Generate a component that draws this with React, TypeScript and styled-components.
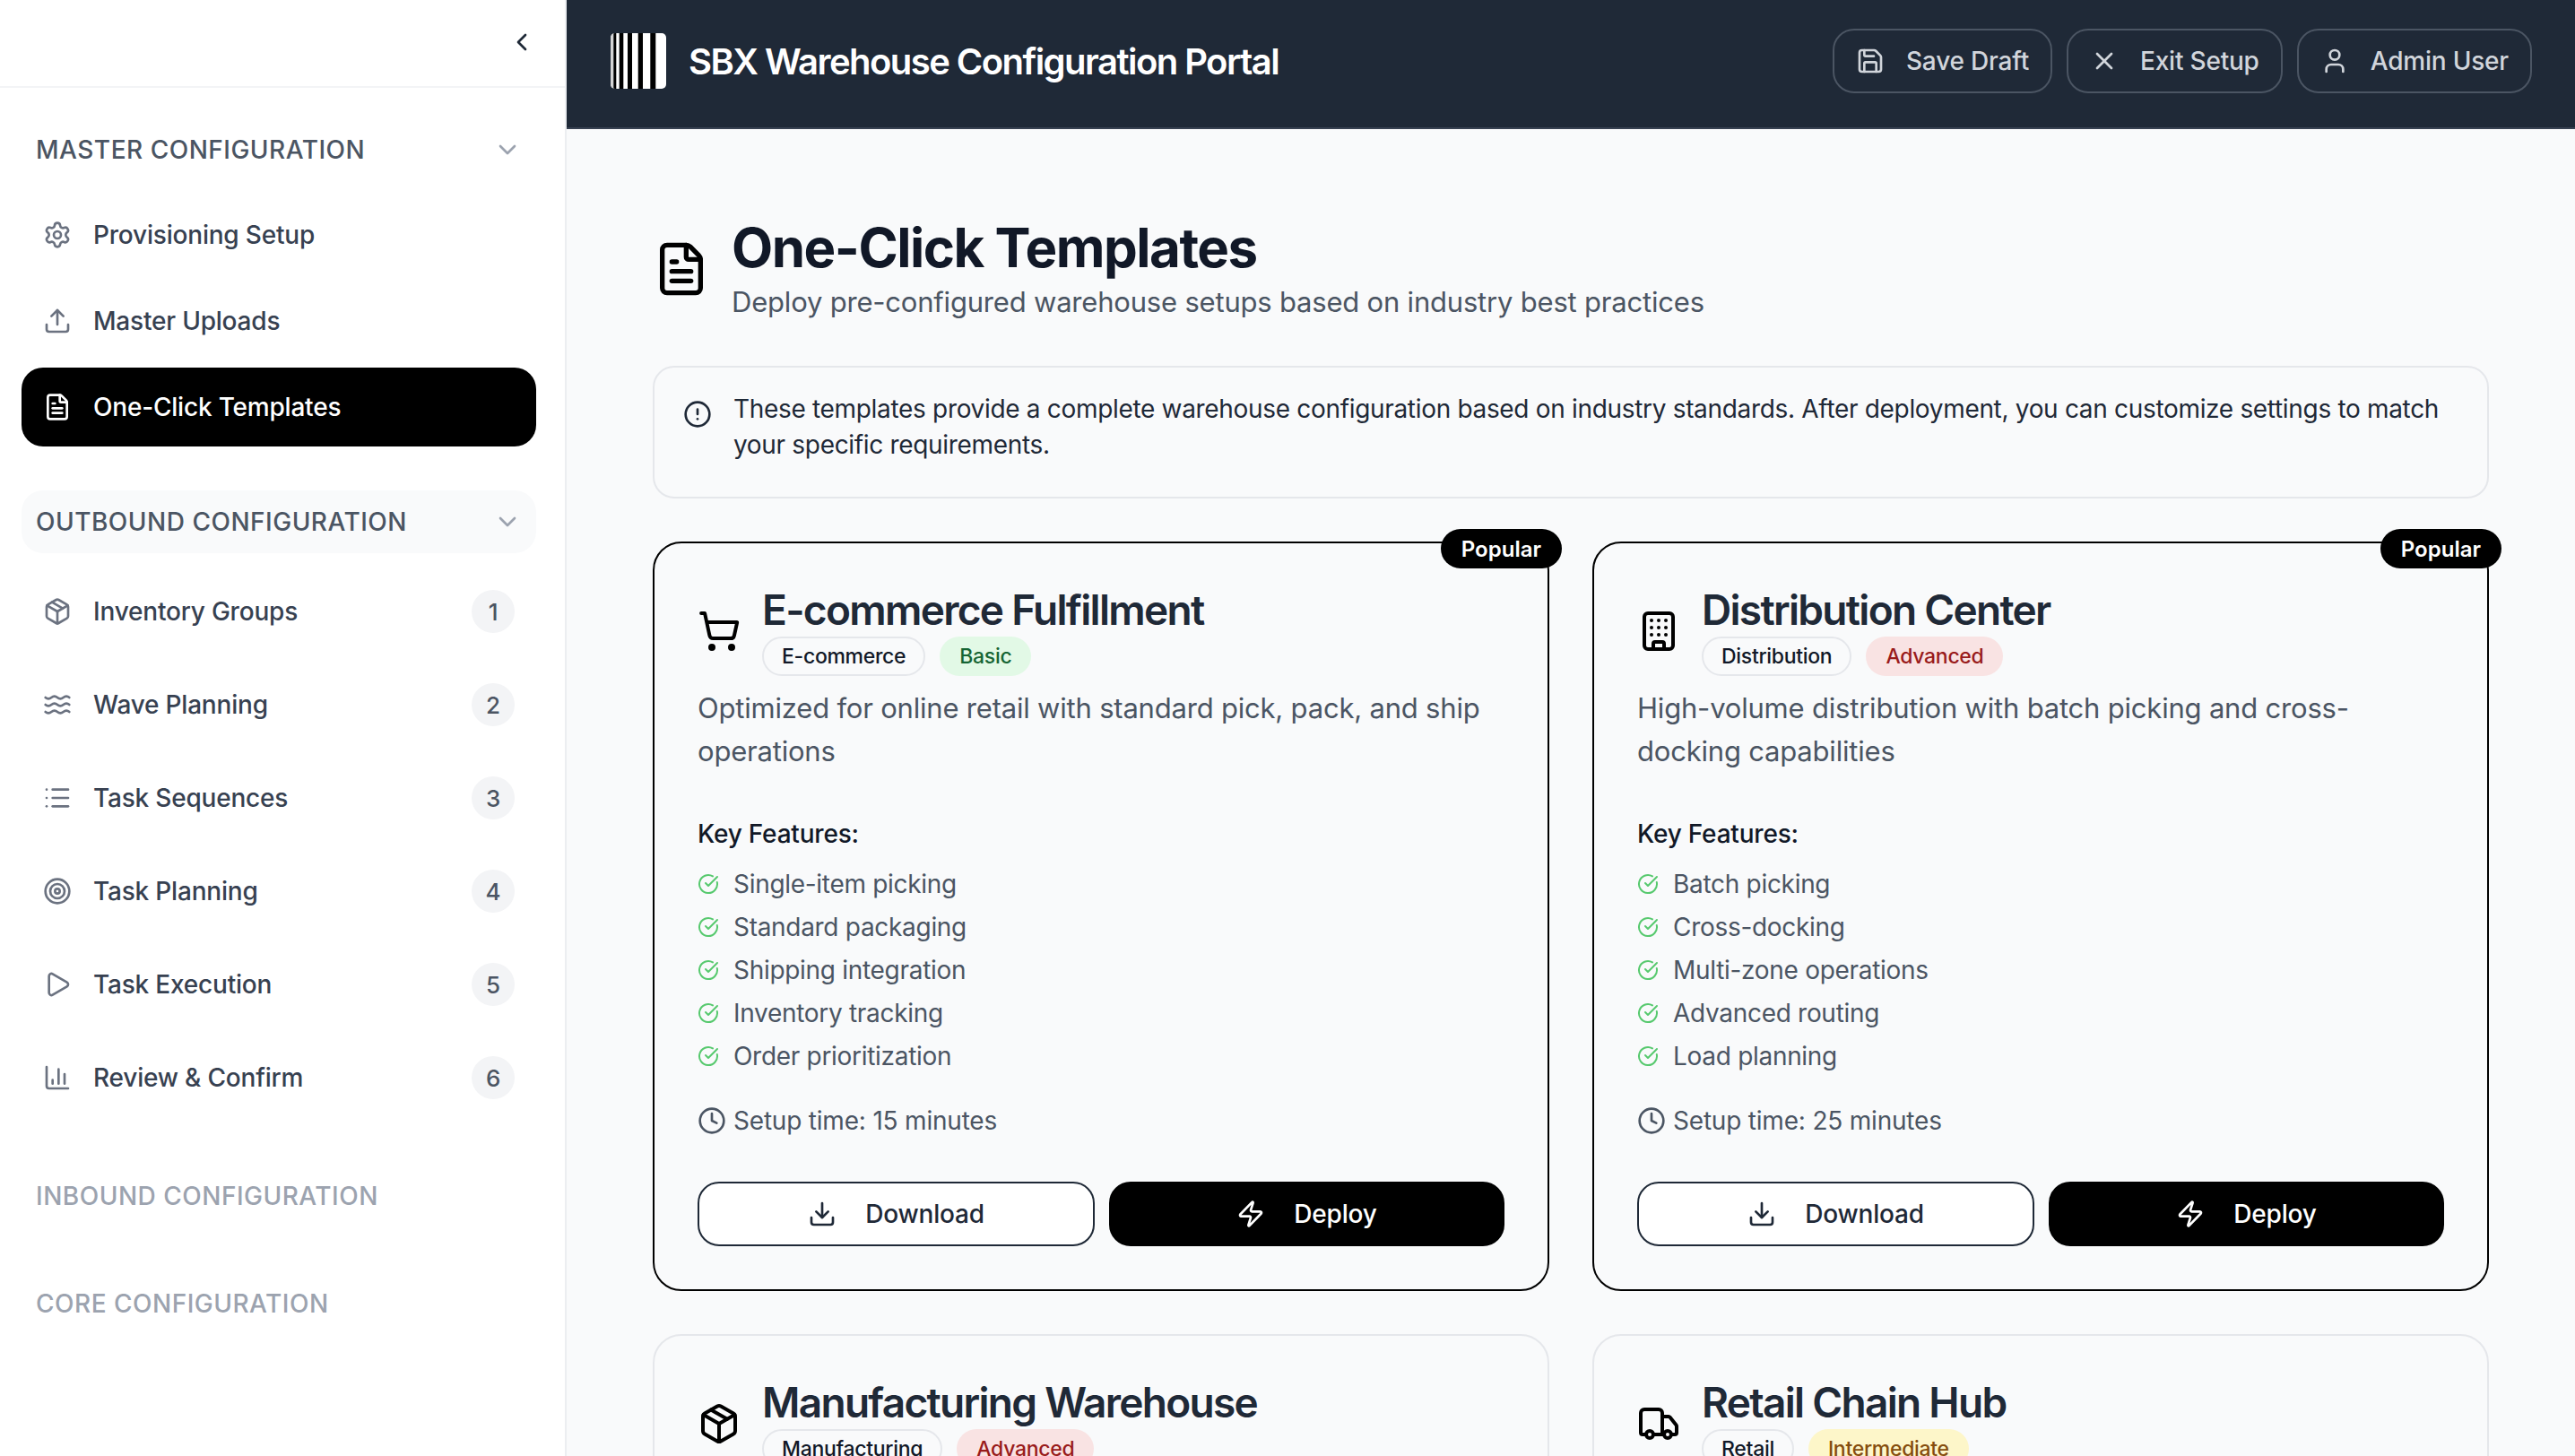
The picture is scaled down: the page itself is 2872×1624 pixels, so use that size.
import React from "react";
import styled, { createGlobalStyle } from "styled-components";
import {
  BarChart3, Building, CheckCircle, ChevronDown, ChevronLeft, Clock, Download, FileText,
  List, Package, Play, Save, Settings, ShoppingCart, Target, Truck, Upload, User, Waves, X, Zap, AlertCircle,
} from "lucide-react";

const Global = createGlobalStyle`
  html, body { margin: 0; padding: 0; height: 100%; overflow: hidden; }
  body { font-family: Inter, "Liberation Sans", sans-serif; background: #f9fafb; }
  * { box-sizing: border-box; }
`;

const Shell = styled.div`
  display: flex;
  width: 2872px;
  height: 1624px;
  overflow: hidden;
`;

const Sidebar = styled.aside`
  flex: 0 0 632px;
  background: #fff;
  border-right: 2px solid #eceef1;
  display: flex;
  flex-direction: column;
`;

const SidebarTop = styled.div`
  height: 98px;
  border-bottom: 2px solid #f3f4f6;
  display: flex;
  align-items: center;
  justify-content: flex-end;
  padding: 0 32px 2px;
  color: #1f2937;
`;

const SideNav = styled.nav`
  padding: 34px 32px 32px 24px;
  display: flex;
  flex-direction: column;
`;

const SectionHeader = styled.div<{ $tone?: "muted"; $hover?: boolean }>`
  height: 70px;
  display: flex;
  align-items: center;
  justify-content: space-between;
  padding: 0 16px 0 16px;
  border-radius: 24px;
  background: ${(p) => (p.$hover ? "#f9fafb" : "transparent")};
  color: ${(p) => (p.$tone === "muted" ? "#9ca3af" : "#4b5563")};
  font-size: 28px;
  font-weight: 500;
  letter-spacing: 0.5px;
  text-transform: uppercase;
  svg { color: #9ca3af; }
`;

const NavList = styled.div<{ $gap: number; $top: number }>`
  display: flex;
  flex-direction: column;
  gap: ${(p) => p.$gap}px;
  margin-top: ${(p) => p.$top}px;
`;

const NavItem = styled.div<{ $active?: boolean; $tall?: boolean }>`
  height: ${(p) => (p.$tall ? 96 : 88)}px;
  display: flex;
  align-items: center;
  gap: 24px;
  padding: 0 24px;
  border-radius: 24px;
  background: ${(p) => (p.$active ? "#000" : "transparent")};
  color: ${(p) => (p.$active ? "#fff" : "#374151")};
  font-size: 28px;
  font-weight: 500;
  letter-spacing: -0.2px;
  svg { flex: none; color: ${(p) => (p.$active ? "#fff" : "#6b7280")}; }
`;

const NavLabel = styled.span`
  flex: 1;
`;

const StepBadge = styled.span`
  width: 48px;
  height: 48px;
  border-radius: 50%;
  background: #f3f4f6;
  color: #4b5563;
  font-size: 26px;
  font-weight: 500;
  display: flex;
  align-items: center;
  justify-content: center;
`;

const MutedSection = styled(SectionHeader)<{ $top: number }>`
  margin-top: ${(p) => p.$top}px;
`;

const Right = styled.div`
  flex: 1;
  min-width: 0;
  display: flex;
  flex-direction: column;
`;

const TopBar = styled.header`
  flex: 0 0 144px;
  background: #1f2937;
  border-bottom: 2px solid #374151;
  padding: 32px 48px 0;
  display: flex;
  align-items: flex-start;
  justify-content: space-between;
`;

const Brand = styled.div`
  height: 72px;
  display: flex;
  align-items: center;
  gap: 25px;
  padding-left: 1px;
`;

const BrandTitle = styled.h1`
  margin: 0;
  color: #fff;
  font-size: 40px;
  font-weight: 600;
  letter-spacing: -1.55px;
`;

const TopActions = styled.div`
  display: flex;
  gap: 16px;
`;

const TopButton = styled.button`
  height: 72px;
  display: flex;
  align-items: center;
  gap: 24px;
  padding: 0 24px;
  background: transparent;
  border: 2px solid #4b5563;
  border-radius: 24px;
  color: #d1d5db;
  font: 500 28px Inter, sans-serif;
  letter-spacing: -0.2px;
`;

const Content = styled.main`
  flex: 1;
  overflow: hidden;
  padding: 96px;
  background: #f9fafb;
`;

const PageHead = styled.div`
  display: flex;
  align-items: center;
  gap: 24px;
  height: 120px;
  margin-bottom: 48px;
  svg { flex: none; color: #000; }
`;

const PageTitle = styled.h2`
  margin: -3px 0 5px;
  color: #111827;
  font-size: 60px;
  line-height: 72px;
  font-weight: 700;
  letter-spacing: -1.5px;
`;

const PageSub = styled.p`
  margin: 0;
  color: #4b5563;
  font-size: 31px;
  line-height: 40px;
  letter-spacing: -0.2px;
`;

const Notice = styled.div`
  display: flex;
  gap: 24px;
  height: 148px;
  padding: 26px 32px;
  border: 2px solid #e5e7eb;
  border-radius: 24px;
  background: #f9fafb;
  color: #1f2937;
  font-size: 28px;
  line-height: 40px;
  letter-spacing: -0.32px;
  margin-bottom: 48px;
  svg { flex: none; margin-top: 10px; }
`;

const CardGrid = styled.div`
  display: grid;
  grid-template-columns: 1fr 1fr;
  gap: 48px;
`;

const Card = styled.article<{ $popular?: boolean }>`
  position: relative;
  border: 2px solid ${(p) => (p.$popular ? "#000" : "#e5e7eb")};
  border-radius: 32px;
  padding: 48px;
  background: #f9fafb;
  height: ${(p) => (p.$popular ? "836px" : "auto")};
`;

const PopularTag = styled.span`
  position: absolute;
  top: -16px;
  right: -16px;
  height: 44px;
  padding: 0 23px;
  background: #000;
  color: #fff;
  border-radius: 22px;
  font-size: 24px;
  font-weight: 600;
  display: flex;
  align-items: center;
`;

const CardHead = styled.div`
  display: flex;
  gap: 24px;
  align-items: center;
  svg { flex: none; color: #000; }
`;

const CardTitle = styled.h3`
  margin: -2px 0 2px;
  color: #1f2937;
  font-size: 46px;
  line-height: 56px;
  font-weight: 600;
  letter-spacing: -1.7px;
`;

const TagRow = styled.div`
  display: flex;
  gap: 16px;
`;

const Tag = styled.span<{ $kind?: "outline" | "green" | "red" | "yellow" }>`
  height: 44px;
  padding: 0 ${(p) => (p.$kind === "outline" ? 20 : 22)}px;
  display: flex;
  align-items: center;
  border-radius: 22px;
  font-size: 23px;
  letter-spacing: -0.3px;
  font-weight: 500;
  border: ${(p) => (p.$kind === "outline" ? "2px solid #e5e7eb" : "none")};
  background: ${(p) =>
    p.$kind === "green" ? "#e2f9e6" : p.$kind === "red" ? "#f9e3e3" : p.$kind === "yellow" ? "#fdf6c9" : "transparent"};
  color: ${(p) =>
    p.$kind === "green" ? "#166534" : p.$kind === "red" ? "#991b1b" : p.$kind === "yellow" ? "#854d0e" : "#111827"};
`;

const Desc = styled.p`
  margin: 12px 0 48px;
  color: #4b5563;
  font-size: 31px;
  line-height: 48px;
  letter-spacing: -0.2px;
`;

const FeatHead = styled.div`
  color: #111827;
  font-size: 28px;
  font-weight: 500;
  line-height: 40px;
  letter-spacing: -0.2px;
`;

const FeatList = styled.ul`
  list-style: none;
  margin: 16px 0 0;
  padding: 0;
  display: flex;
  flex-direction: column;
  gap: 8px;
`;

const Feat = styled.li`
  height: 40px;
  display: flex;
  align-items: center;
  gap: 16px;
  color: #4b5563;
  font-size: 28px;
  letter-spacing: -0.3px;
  svg { flex: none; color: #57c96e; }
`;

const SetupTime = styled.div`
  height: 40px;
  display: flex;
  align-items: center;
  gap: 8px;
  margin-top: 32px;
  color: #4b5563;
  font-size: 28px;
  letter-spacing: -0.2px;
  svg { flex: none; }
`;

const ActionRow = styled.div`
  display: grid;
  grid-template-columns: 443px 1fr;
  gap: 16px;
  margin-top: 48px;
`;

const ActionButton = styled.button<{ $primary?: boolean }>`
  height: 72px;
  display: flex;
  align-items: center;
  justify-content: center;
  gap: 32px;
  border-radius: 24px;
  border: 2px solid ${(p) => (p.$primary ? "#000" : "#1f2937")};
  background: ${(p) => (p.$primary ? "#000" : "#fff")};
  color: ${(p) => (p.$primary ? "#fff" : "#1f2937")};
  font: 500 28px Inter, sans-serif;
  letter-spacing: -0.2px;
`;

const Logo = () => (
  <svg width="62" height="62" viewBox="0 0 62 62">
    <defs>
      <clipPath id="logoClip"><rect width="62" height="62" rx="5" /></clipPath>
    </defs>
    <g clipPath="url(#logoClip)">
      <rect width="62" height="62" fill="#fff" />
      <rect width="3.3" height="62" fill="#d4d4d4" />
      <rect x="3.3" width="3" height="62" fill="#000" />
      <rect x="9.7" width="4.6" height="62" fill="#000" />
      <rect x="19" width="5" height="62" fill="#000" />
      <rect x="30.7" width="5.3" height="62" fill="#000" />
      <rect x="44.3" width="6" height="62" fill="#000" />
    </g>
  </svg>
);

type CardData = {
  icon: React.ElementType; title: string; category: string; level: string;
  kind: "green" | "red" | "yellow"; popular?: boolean; desc: string; feats: string[]; time: string;
};

const cards: CardData[] = [
  { icon: ShoppingCart, title: "E-commerce Fulfillment", category: "E-commerce", level: "Basic", kind: "green", popular: true,
    desc: "Optimized for online retail with standard pick, pack, and ship operations",
    feats: ["Single-item picking", "Standard packaging", "Shipping integration", "Inventory tracking", "Order prioritization"], time: "15" },
  { icon: Building, title: "Distribution Center", category: "Distribution", level: "Advanced", kind: "red", popular: true,
    desc: "High-volume distribution with batch picking and cross-docking capabilities",
    feats: ["Batch picking", "Cross-docking", "Multi-zone operations", "Advanced routing", "Load planning"], time: "25" },
  { icon: Package, title: "Manufacturing Warehouse", category: "Manufacturing", level: "Advanced", kind: "red",
    desc: "Raw materials and finished goods handling with production line support",
    feats: ["Kitting", "Line feeding"], time: "30" },
  { icon: Truck, title: "Retail Chain Hub", category: "Retail", level: "Intermediate", kind: "yellow",
    desc: "Store replenishment with mixed pallet building",
    feats: ["Store replenishment", "Mixed pallets"], time: "20" },
];

const outbound: [React.ElementType, string][] = [
  [Package, "Inventory Groups"], [Waves, "Wave Planning"], [List, "Task Sequences"],
  [Target, "Task Planning"], [Play, "Task Execution"], [BarChart3, "Review & Confirm"],
];

export default function App() {
  return (
    <Shell>
      <Global />
      <Sidebar>
        <SidebarTop><ChevronLeft size={32} /></SidebarTop>
        <SideNav>
          <SectionHeader>MASTER CONFIGURATION<ChevronDown size={32} /></SectionHeader>
          <NavList $gap={8} $top={16}>
            <NavItem><Settings size={32} /><NavLabel>Provisioning Setup</NavLabel></NavItem>
            <NavItem><Upload size={32} /><NavLabel>Master Uploads</NavLabel></NavItem>
            <NavItem $active><FileText size={32} /><NavLabel>One-Click Templates</NavLabel></NavItem>
          </NavList>
          <MutedSection $top={49} $hover>OUTBOUND CONFIGURATION<ChevronDown size={32} /></MutedSection>
          <NavList $gap={8} $top={17}>
            {outbound.map(([Icon, label], i) => (
              <NavItem $tall key={label}>
                <Icon size={32} /><NavLabel>{label}</NavLabel><StepBadge>{i + 1}</StepBadge>
              </NavItem>
            ))}
          </NavList>
          <MutedSection $top={49} $tone="muted">INBOUND CONFIGURATION</MutedSection>
          <MutedSection $top={50} $tone="muted">CORE CONFIGURATION</MutedSection>
        </SideNav>
      </Sidebar>
      <Right>
        <TopBar>
          <Brand><Logo /><BrandTitle>SBX Warehouse Configuration Portal</BrandTitle></Brand>
          <TopActions>
            <TopButton><Save size={32} />Save Draft</TopButton>
            <TopButton><X size={32} />Exit Setup</TopButton>
            <TopButton><User size={32} />Admin User</TopButton>
          </TopActions>
        </TopBar>
        <Content>
          <PageHead>
            <FileText size={64} />
            <div>
              <PageTitle>One-Click Templates</PageTitle>
              <PageSub>Deploy pre-configured warehouse setups based on industry best practices</PageSub>
            </div>
          </PageHead>
          <Notice>
            <AlertCircle size={32} />
            <span>These templates provide a complete warehouse configuration based on industry standards. After deployment, you can customize settings to match your specific requirements.</span>
          </Notice>
          <CardGrid>
            {cards.map((c) => (
              <Card key={c.title} $popular={c.popular}>
                {c.popular && <PopularTag>Popular</PopularTag>}
                <CardHead>
                  <c.icon size={48} />
                  <div>
                    <CardTitle>{c.title}</CardTitle>
                    <TagRow><Tag $kind="outline">{c.category}</Tag><Tag $kind={c.kind}>{c.level}</Tag></TagRow>
                  </div>
                </CardHead>
                <Desc>{c.desc}</Desc>
                <FeatHead>Key Features:</FeatHead>
                <FeatList>
                  {c.feats.map((f) => <Feat key={f}><CheckCircle size={24} />{f}</Feat>)}
                </FeatList>
                <SetupTime><Clock size={32} />Setup time: {c.time} minutes</SetupTime>
                <ActionRow>
                  <ActionButton><Download size={32} />Download</ActionButton>
                  <ActionButton $primary><Zap size={32} />Deploy</ActionButton>
                </ActionRow>
              </Card>
            ))}
          </CardGrid>
        </Content>
      </Right>
    </Shell>
  );
}
